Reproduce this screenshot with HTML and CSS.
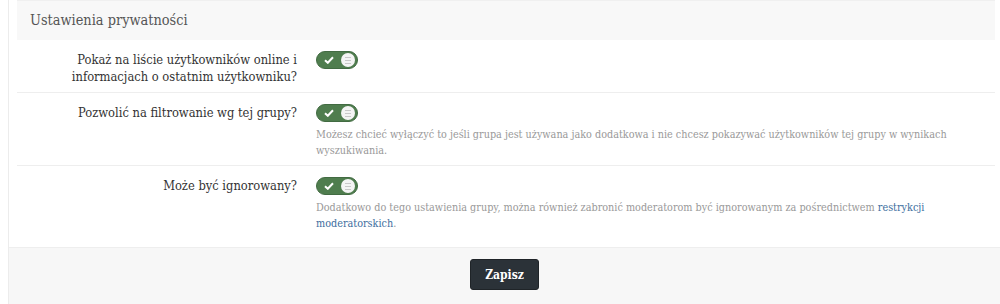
FILE: index.html
```html
<!DOCTYPE html>
<html lang="pl">
<head>
    <meta charset="UTF-8">
    <title>Ustawienia prywatności</title>
    <link rel="stylesheet" href="styles.css">
</head>
<body>
    <div class="page">
        <div class="settings">
            <h3 class="settings-head">Ustawienia prywatności</h3>

            <div class="setting-row first">
                <label class="setting-label">Pokaż na liście użytkowników online i informacjach o ostatnim użytkowniku?</label>
                <div class="setting-control">
                    <span class="toggle">
                        <svg class="toggle-check" width="10" height="8" viewBox="0 0 10 8"><path d="M1 4.2 L3.8 6.8 L9 1.2" fill="none" stroke="#fff" stroke-width="2"/></svg>
                        <span class="toggle-knob"><i></i></span>
                    </span>
                </div>
            </div>

            <div class="setting-row">
                <label class="setting-label">Pozwolić na filtrowanie wg tej grupy?</label>
                <div class="setting-control">
                    <span class="toggle">
                        <svg class="toggle-check" width="10" height="8" viewBox="0 0 10 8"><path d="M1 4.2 L3.8 6.8 L9 1.2" fill="none" stroke="#fff" stroke-width="2"/></svg>
                        <span class="toggle-knob"><i></i></span>
                    </span>
                    <p class="setting-help">Możesz chcieć wyłączyć to jeśli grupa jest używana jako dodatkowa i nie chcesz pokazywać użytkowników tej grupy w wynikach wyszukiwania.</p>
                </div>
            </div>

            <div class="setting-row last">
                <label class="setting-label">Może być ignorowany?</label>
                <div class="setting-control">
                    <span class="toggle">
                        <svg class="toggle-check" width="10" height="8" viewBox="0 0 10 8"><path d="M1 4.2 L3.8 6.8 L9 1.2" fill="none" stroke="#fff" stroke-width="2"/></svg>
                        <span class="toggle-knob"><i></i></span>
                    </span>
                    <p class="setting-help">Dodatkowo do tego ustawienia grupy, można również zabronić moderatorom być ignorowanym za pośrednictwem <a href="#">restrykcji moderatorskich</a>.</p>
                </div>
            </div>
        </div>

        <div class="form-footer">
            <button type="submit" class="save-btn">Zapisz</button>
        </div>
    </div>
</body>
</html>
```

FILE: styles.css
```css
body {
    margin: 0;
    font-family: "Roboto Slab", "DejaVu Serif Condensed", "Liberation Serif", serif;
    background-color: #fff;
    color: #333;
}
.page {
    margin-left: 8px;
    border-left: 1px solid #ececec;
    height: 304px;
    display: flex;
    flex-direction: column;
}
.settings {
    margin: 0 5px 0 8px;
    border-top: 1px solid #f0f0f0;
}
.settings-head {
    margin: 0;
    height: 39px;
    line-height: 39px;
    padding: 0 13px;
    background-color: #f8f8f8;
    font-size: 14.4px;
    font-weight: normal;
    color: #555;
}
.setting-row {
    display: grid;
    grid-template-columns: 280px 1fr;
    column-gap: 19px;
    padding: 11px 0 6px;
    border-bottom: 1px solid #eee;
}
.setting-row.first {
    padding-bottom: 7px;
}
.setting-row.last {
    border-bottom: none;
    padding-bottom: 12px;
}
.setting-label {
    text-align: right;
    font-size: 12.8px;
    line-height: 17px;
    color: #333;
}
.setting-control {
    display: flex;
    flex-direction: column;
    align-items: flex-start;
}
.toggle {
    display: flex;
    align-items: center;
    justify-content: space-between;
    box-sizing: border-box;
    width: 42px;
    height: 18px;
    padding: 0 2px 0 7px;
    background-color: #4f7d4e;
    border: 1px solid #426b42;
    border-radius: 9px;
}
.toggle-knob {
    display: flex;
    align-items: center;
    justify-content: center;
    width: 14px;
    height: 14px;
    border-radius: 50%;
    background-color: #f4f4f4;
}
.toggle-knob i {
    width: 6px;
    height: 5px;
    border-top: 1px solid #c8c8c8;
    border-bottom: 1px solid #c8c8c8;
    background: linear-gradient(#c8c8c8, #c8c8c8) center / 100% 1px no-repeat;
}
.setting-help {
    margin: 5px 0 0;
    font-size: 10.75px;
    line-height: 16px;
    color: #999;
}
.setting-help a {
    color: #3c6e9e;
    text-decoration: none;
}
.form-footer {
    flex: 1;
    margin-top: 3px;
    background-color: #f7f7f7;
    border-top: 1px solid #eee;
    display: flex;
    justify-content: center;
    align-items: flex-start;
    padding-top: 11px;
}
.save-btn {
    width: 69px;
    height: 31px;
    background-color: #2b3238;
    color: #fff;
    border: 1px solid #1f2428;
    border-radius: 3px;
    font-family: inherit;
    font-size: 12px;
    font-weight: bold;
}
```
